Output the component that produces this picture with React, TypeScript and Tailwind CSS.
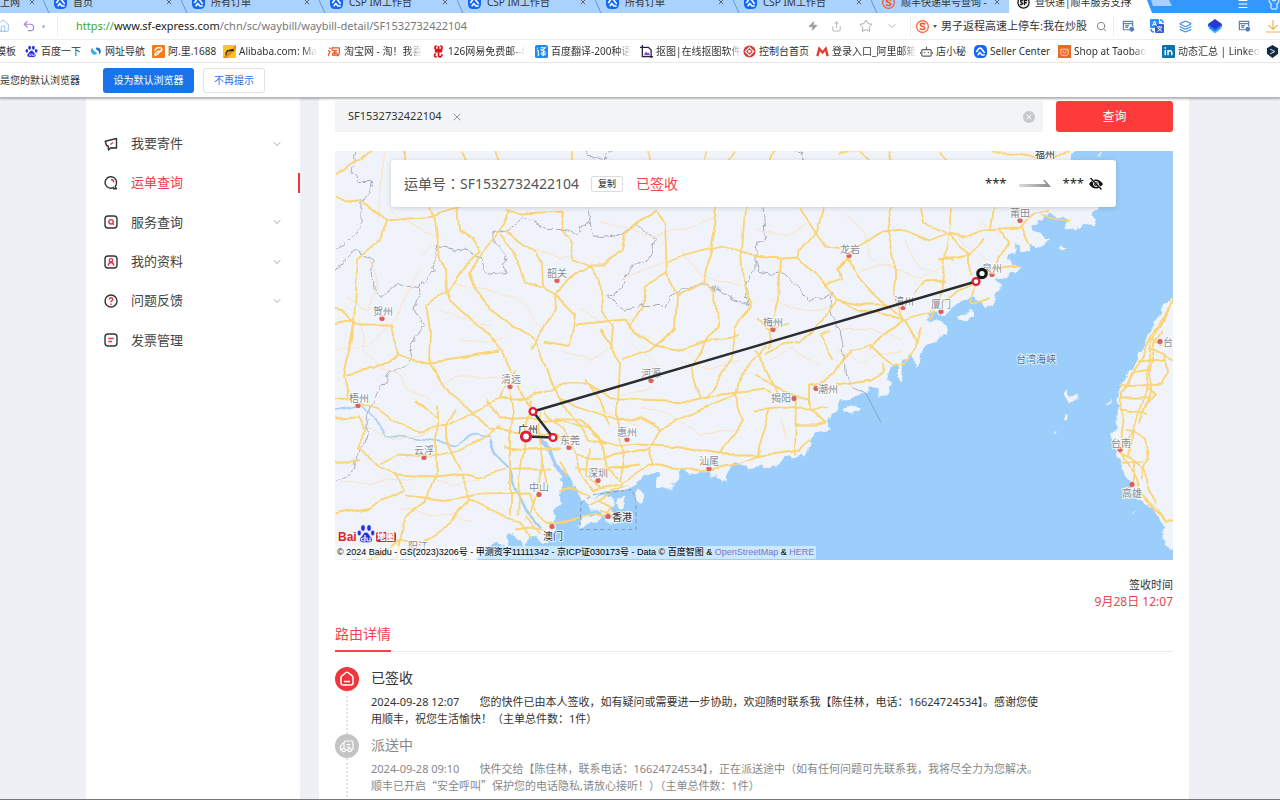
import React, { useState } from "react";
import { ChevronDown, Menu, Search, Share, Shirt, Star, Undo2, X, Zap, Layers, Home } from "lucide-react";
import { clsx } from "clsx";

type IconName =
    | "seller" | "sogou" | "sf" | "baidu" | "nav" | "ali" | "alibaba" | "taobao" | "netease"
    | "translate" | "crop" | "console" | "mail" | "robot" | "shop" | "linkedin" | "deepl";

function SiteIcon({ name }: { name: IconName }) {
    return (
        <svg viewBox="0 0 14 14" className="h-[13px] w-[13px] shrink-0" aria-hidden="true">
            {name === "seller" && (
                <>
                    <rect width="14" height="14" rx="5" fill="#1467f2" />
                    <path d="M2.500 7.500 5 4Q6.500 2.300 8 4l3.500 4.500M4 11l2.200-3 2.300 2.800h3" fill="none" stroke="#fff" strokeWidth="1.700" strokeLinejoin="round" />
                </>
            )}
            {name === "sogou" && (
                <>
                    <circle cx="7" cy="7" r="6.3" fill="none" stroke="#f4572a" strokeWidth="1.3" />
                    <path d="M10 4.600Q7 2.800 5 4.300 4 5.800 6.500 6.800 10 7.600 9.400 9.300 7.500 11 4 9.300" fill="none" stroke="#f4572a" strokeWidth="1.700" />
                </>
            )}
            {name === "sf" && (
                <>
                    <circle cx="7" cy="7" r="6" fill="#fff" stroke="#161616" strokeWidth="1.400" />
                    <path d="M6.500 5Q3.500 4 4 6.300L6 7.800Q6 9.500 3 9M8 10V5h3M8 7.300h2.500" fill="none" stroke="#161616" strokeWidth="1.500" />
                </>
            )}
            {name === "baidu" && (
                <g fill="#2932e1">
                    <ellipse cx="5" cy="3" rx="1.500" ry="2.200" />
                    <ellipse cx="9" cy="3" rx="1.500" ry="2.200" />
                    <ellipse cx="2" cy="6.300" rx="1.400" ry="2" />
                    <ellipse cx="12" cy="6.300" rx="1.400" ry="2" />
                    <path d="M7 6C5 6.500 4.500 8.500 3 9.800 1.500 12 3.500 13.800 7 12.900c3.500.9 5.500-.9 4-3.100C9.500 8.500 9 6.500 7 6z" />
                    <path d="M5 9.500v2h1.500V9M8 9.500v2h2v-2" fill="none" stroke="#fff" strokeWidth=".7" />
                </g>
            )}
            {name === "nav" && (
                <>
                    <path d="M3.500 3q-3 3.500 0 6.500 3 2 5 0Q9 8 7 7.500 4.500 6.500 3.500 3z" fill="#37b0e4" />
                    <path d="M7 3q1 3 3 3.500 1.500 1 .5 4 3-2 2-5.500Q11 2 7 3z" fill="#2b78c9" />
                </>
            )}
            {name === "ali" && (
                <>
                    <rect width="14" height="14" rx="1" fill="#ee7d21" />
                    <path d="M3 6q2-4 5-3 4 0 2 3L6 10q-3 2-3 0 0-1 3-3l5-1" fill="none" stroke="#fff" strokeWidth="1.500" />
                </>
            )}
            {name === "alibaba" && (
                <>
                    <rect width="14" height="14" fill="#fbc71f" />
                    <path d="M0 14 14 0v4L4 14z" fill="#f0821d" />
                    <path d="M3 11q0-6 8-6M4 6h8" fill="none" stroke="#2a2413" strokeWidth="1.400" />
                </>
            )}
            {name === "taobao" && (
                <path d="m1 3 2 1M0 6l2 1-2 5M5 2 4 6m1-3h7q1 8-2 9M5 6h5M5 8.500h5M7.500 6v5M5 9v2h5V9" fill="none" stroke="#f0541e" strokeWidth="1.400" />
            )}
            {name === "netease" && (
                <path d="M5 1Q2 2 4 5h6q2-3-1-4M7 1v7M3 7h8M4 9q-3 3 1 4M7 8v4q3 2 4-2" fill="none" stroke="#e0141e" strokeWidth="1.900" />
            )}
            {name === "translate" && (
                <>
                    <rect width="14" height="14" rx="2" fill="#2388ee" />
                    <path d="m2 3 1 1M2 6h1.500v5l1-1M6 3h5L7 6.500M6 4.500 11 7M6 8.500h6M9 6.500V12M6.500 10.500h5" fill="none" stroke="#fff" strokeWidth="1.100" />
                </>
            )}
            {name === "crop" && (
                <>
                    <path d="M2.500 0v12.500H14M0 2.500h9l3 3V14" fill="none" stroke="#242536" strokeWidth="1.400" />
                    <path d="m4 11 2.500-4 1.500 2 1-1 2 3z" fill="#7547e3" />
                </>
            )}
            {name === "console" && (
                <>
                    <circle cx="7" cy="7" r="6.500" fill="#d83a34" />
                    <path d="m7 2.500 4.500 4.500L7 11.500 2.500 7z" fill="none" stroke="#fff" strokeWidth="1.200" />
                    <circle cx="7" cy="7" r="1.500" fill="#fff" />
                </>
            )}
            {name === "mail" && <path d="M1.500 12 3.500 4 7 8l3.500-4 2 8" fill="none" stroke="#df3e38" strokeWidth="2.600" />}
            {name === "robot" && (
                <path d="M3 5h8q1 0 1 1v5q0 1-1 1H3q-1 0-1-1V6q0-1 1-1zM7 5V1.500M5 7.500v1.500M9 7.500V9M.5 7.500v2M13.500 7.500v2" fill="none" stroke="#5c6064" strokeWidth="1.200" />
            )}
            {name === "shop" && (
                <>
                    <rect width="14" height="14" fill="#ee6724" />
                    <path d="M3 4.500h8V9q0 2.500-4 2.500T3 9zM5.500 6v2q1.500 2 3 0V6" fill="none" stroke="#fdd5b5" />
                </>
            )}
            {name === "linkedin" && (
                <>
                    <rect width="14" height="14" rx="1" fill="#0a72b1" />
                    <path d="M3.500 5.500V11M3.500 2.500V4M6.500 11V5.500M6.500 7.500q3.500-3 4 .5v3" fill="none" stroke="#fff" strokeWidth="1.600" />
                </>
            )}
            {name === "deepl" && (
                <>
                    <path d="m7 0 6 3.500v6L7 14 1 9.500v-6z" fill="#0f2b46" />
                    <path d="m4.500 4.500 5 2.500-5 2.500" fill="none" stroke="#fff" />
                </>
            )}
        </svg>
    );
}

const tabs: { icon: IconName; title: string }[] = [
    { icon: "seller", title: "首页" },
    { icon: "seller", title: "所有订单" },
    { icon: "seller", title: "CSP IM工作台" },
    { icon: "seller", title: "CSP IM工作台" },
    { icon: "seller", title: "所有订单" },
    { icon: "seller", title: "CSP IM工作台" },
    { icon: "sogou", title: "顺丰快递单号查询 -" },
];

function TabEdge() {
    return (
        <svg viewBox="0 0 8 13" className="h-[13px] w-2 shrink-0" aria-hidden="true">
            <path d="M0 0 6 13" stroke="#5c97d6" fill="none" />
        </svg>
    );
}

function TabStrip() {
    return (
        <div className="flex h-[13px] shrink-0 items-end overflow-hidden bg-[#3596fc] text-[10px] text-[#333]">
            <div className="flex h-[22px] w-[43px] shrink-0 items-center gap-2 bg-[#aad2ff] whitespace-nowrap">
                <span className="w-5">上网</span>
                <X className="h-2 w-2" />
            </div>
            {tabs.map((tab, i) => (
                <div key={i} className="flex h-[22px] w-[138px] shrink-0 items-end bg-[#aad2ff]">
                    <TabEdge />
                    <button className="flex h-full min-w-0 flex-1 items-center gap-[6px] pr-2 pl-[3px]">
                        <SiteIcon name={tab.icon} />
                        <span className="min-w-0 flex-1 text-left whitespace-nowrap">{tab.title}</span>
                        <X className="h-2 w-2 shrink-0" />
                    </button>
                </div>
            ))}
            <div className="flex h-[22px] w-[136px] shrink-0 items-center gap-[5px] bg-white pr-3 pl-2">
                <SiteIcon name="sf" />
                <span className="min-w-0 flex-1 whitespace-nowrap">查快递|顺丰服务支持</span>
                <X className="h-2 w-2 shrink-0" />
            </div>
            <svg viewBox="0 0 32 13" className="h-[13px] w-8 shrink-0" aria-hidden="true">
                <path d="M0 0h2l5 13H0z" fill="#fff" />
                <path d="M6 0h18l3 6H8z" fill="#a5d0ff" />
            </svg>
            <div className="flex h-[18px] flex-1 items-center justify-end gap-[19px] text-white">
                <Menu className="h-3 w-3" />
                <Shirt className="h-3 w-3" />
            </div>
        </div>
    );
}

function WindowGear() {
    return (
        <svg viewBox="0 0 14 14" className="h-[13px] w-[13px] shrink-0" aria-hidden="true">
            <path d="M8 10.500H1.500v-9h10V7M1.500 4h10M3.500 6h4M3.500 8h3" fill="none" stroke="#6381ad" strokeWidth="1.300" />
            <circle cx="10.500" cy="10" r="2.600" fill="#527ebd" />
        </svg>
    );
}

function AddressBar() {
    return (
        <div className="flex h-[27px] shrink-0 items-center border-b border-[#ececec] bg-white text-[11px]">
            <Home className="-ml-1 h-[14px] w-[14px] shrink-0 text-[#84b9ec]" strokeWidth={1.5} />
            <Undo2 className="ml-3 h-[14px] w-[14px] shrink-0 text-[#ae80d9]" strokeWidth={2} />
            <span className="ml-1.5 h-[3px] w-[3px] shrink-0 rounded-full bg-[#9bbde3]" />
            <span className="ml-3 h-5 w-px shrink-0 bg-[#eee]" />
            <div className="flex min-w-0 flex-1 items-center pl-[18px] whitespace-nowrap">
                <span className="text-[#43a52e]">https://</span>
                <span className="text-[#222]">www.sf-express.com</span>
                <input
                    aria-label="地址栏"
                    defaultValue="/chn/sc/waybill/waybill-detail/SF1532732422104"
                    className="min-w-0 flex-1 bg-transparent text-[#777] focus:outline-none"
                />
            </div>
            <div className="flex shrink-0 items-center gap-[13px] pr-3 text-[#9b9b9b]">
                <Zap className="h-[10px] w-[10px] fill-[#9b9b9b]" />
                <Share className="h-[11px] w-[11px]" strokeWidth={1.5} />
                <Star className="ml-1 h-[14px] w-[14px]" strokeWidth={1.5} />
                <ChevronDown className="h-3 w-3" strokeWidth={1.5} />
            </div>
            <label className="flex h-5 w-[204px] shrink-0 items-center border-x border-[#eee] pl-[5px] text-[11px] text-[#333]">
                <SiteIcon name="sogou" />
                <span className="mx-[4px] border-x-2 border-t-[3px] border-x-transparent border-t-[#555]" />
                <input
                    aria-label="搜索"
                    defaultValue="男子返程高速上停车:我在炒股"
                    className="min-w-0 flex-1 bg-transparent focus:outline-none"
                />
                <Search className="mr-[6px] h-[11px] w-[11px] shrink-0 text-[#777]" />
            </label>
            <div className="flex w-[166px] shrink-0 items-center justify-between pl-2">
                <WindowGear />
                <svg viewBox="0 0 14 14" className="h-[14px] w-[14px]" aria-hidden="true">
                    <rect width="9" height="9" rx="1" fill="#2892ff" />
                    <rect x="5" y="5" width="9" height="9" rx="1" fill="#3a5bd8" />
                    <path d="M2.500 7 4.500 2l2 5M3 5.300h3" stroke="#fff" fill="none" />
                    <path d="M7 8h5M9.500 7v1M8 9l4 3.500M11.500 9 7.500 12.500" stroke="#fff" fill="none" />
                    <path d="M10 1q3 0 3 3M1 10q0 3 3 3" stroke="#2892ff" fill="none" strokeWidth="1.500" />
                </svg>
                <Layers className="h-[13px] w-[13px] text-[#3c87e0]" />
                <svg viewBox="0 0 16 16" className="h-4 w-4" aria-hidden="true">
                    <path d="m1 10 7 5.500L15 10z" fill="#35c8f5" />
                    <path d="m1 8.500 7 5 7-5V6H1z" fill="#2b6df0" />
                    <path d="m8 1 7 5-7 5-7-5z" fill="#2339d2" />
                </svg>
                <WindowGear />
                <svg viewBox="0 0 14 14" className="h-[14px] w-[14px]" aria-hidden="true">
                    <path d="M7 1v9M2.500 6 7 10.500 11.500 6M0 13h14" stroke="#eeb653" fill="none" strokeWidth="1.200" />
                </svg>
            </div>
        </div>
    );
}

// long: the label runs to the end of its slot and fades out there
const bookmarks: { icon: IconName; label: string; width: string; long?: boolean }[] = [
    { icon: "baidu", label: "百度一下", width: "w-[64px]" },
    { icon: "nav", label: "网址导航", width: "w-[63px]" },
    { icon: "ali", label: "阿.里.1688", width: "w-[71px]" },
    { icon: "alibaba", label: "Alibaba.com: Ma", width: "w-[105px]", long: true },
    { icon: "taobao", label: "淘宝网 - 淘！我喜", width: "w-[104px]", long: true },
    { icon: "netease", label: "126网易免费邮--f", width: "w-[103px]", long: true },
    { icon: "translate", label: "百度翻译-200种语", width: "w-[105px]", long: true },
    { icon: "crop", label: "抠图|在线抠图软件", width: "w-[103px]", long: true },
    { icon: "console", label: "控制台首页", width: "w-[73px]" },
    { icon: "mail", label: "登录入口_阿里邮箱", width: "w-[104px]", long: true },
    { icon: "robot", label: "店小秘", width: "w-[54px]" },
    { icon: "seller", label: "Seller Center", width: "w-[84px]" },
    { icon: "shop", label: "Shop at Taobao", width: "w-[104px]", long: true },
    { icon: "linkedin", label: "动态汇总 | Linked", width: "w-[104px]", long: true },
    { icon: "deepl", label: "", width: "w-[20px]" },
];

function BookmarkBar() {
    return (
        <nav className="flex h-[23px] shrink-0 items-center overflow-hidden border-b border-[#ececec] bg-white text-[10px] text-[#333]">
            <a href="#" className="flex w-[25px] shrink-0 whitespace-nowrap">
                <span className="-ml-1">模板</span>
            </a>
            {bookmarks.map((b) => (
                <a key={b.icon} href="#" aria-label={b.label || "DeepL"} className={clsx("flex shrink-0 items-center gap-[3px]", b.width)}>
                    <SiteIcon name={b.icon} />
                    <span className={clsx("whitespace-nowrap", b.long && "[mask-image:linear-gradient(to_right,black_calc(100%-14px),transparent)]")}>
                        {b.label}
                    </span>
                </a>
            ))}
        </nav>
    );
}

function DefaultBrowserBar() {
    return (
        <div className="relative z-10 flex h-[35px] shrink-0 items-center border-b border-[#b4b5b8] bg-white text-[10px] text-[#333] shadow-[0_1px_2px_rgba(0,0,0,0.3)]">
            <span>是您的默认浏览器</span>
            <button className="ml-[23px] h-[25px] w-[91px] rounded-[3px] bg-[#1a73e8] text-white">设为默认浏览器</button>
            <button className="ml-[9px] h-[25px] w-[62px] rounded-[3px] border border-[#dfe1e5] text-[#1a73e8]">不再提示</button>
        </div>
    );
}

type MenuIcon = "send" | "track" | "service" | "profile" | "help" | "invoice";

const menu: { icon: MenuIcon; label: string; open?: boolean }[] = [
    { icon: "send", label: "我要寄件", open: true },
    { icon: "track", label: "运单查询" },
    { icon: "service", label: "服务查询", open: true },
    { icon: "profile", label: "我的资料", open: true },
    { icon: "help", label: "问题反馈", open: true },
    { icon: "invoice", label: "发票管理" },
];

function MenuGlyph({ name }: { name: MenuIcon }) {
    const boxed = name === "service" || name === "profile" || name === "invoice";
    return (
        <svg viewBox="0 0 14 14" className="h-[14px] w-[14px] shrink-0" fill="none" stroke="#333" strokeWidth="1.400" strokeLinejoin="round" aria-hidden="true">
            {boxed && <rect x="1" y="1" width="12" height="12" rx="3" />}
            {name === "send" && (
                <>
                    <path d="M12.500 1.500 1.200 4.200l1.300 4.300L4.200 9l.3 4 2.300-2.200 5.700.2z" />
                    <path d="m6.500 7.500 2.500-2" stroke="#e0364a" />
                </>
            )}
            {name === "track" && (
                <>
                    <path d="M10 11.200A5.700 5.700 0 1 1 12.500 7q0 2-1.300 3.500l1.300 2.300H9" />
                    <path d="M7 3.500Q9.500 3.800 9.700 6.300" stroke="#e0364a" />
                </>
            )}
            {name === "service" && (
                <g stroke="#e0364a">
                    <circle cx="7" cy="6.800" r="2.200" />
                    <path d="m8.300 8.300 1.500 1.500" />
                </g>
            )}
            {name === "profile" && (
                <g stroke="#e0364a">
                    <circle cx="7" cy="5.300" r="1.700" />
                    <path d="M4.300 10.800q0-3.300 2.700-3.300t2.700 3.300" />
                </g>
            )}
            {name === "help" && (
                <>
                    <circle cx="7" cy="7" r="6" />
                    <path d="M5.200 5.500Q5.400 3.800 7 3.800T8.800 5.500Q8.800 6.500 7 7.300v1M7 9.500V11" stroke="#e0364a" />
                </>
            )}
            {name === "invoice" && <path d="M4.300 5.500h5.400M4.300 8.500h3.700" stroke="#e0364a" />}
        </svg>
    );
}

function Sidebar() {
    const [active, setActive] = useState("运单查询");

    return (
        <aside className="w-[214px] shrink-0 bg-white pt-[26px]">
            <ul className="grid h-[236px] grid-rows-6 text-[13px]">
                {menu.map((item) => (
                    <li key={item.label} className="flex items-center">
                        <button
                            onClick={() => setActive(item.label)}
                            className={clsx(
                                "flex h-5 w-full items-center gap-[13px] border-r-2 pl-[18px]",
                                active === item.label ? "border-[#e8353c] text-[#f03c44]" : "border-transparent text-[#444]"
                            )}
                        >
                            <MenuGlyph name={item.icon} />
                            <span className="flex-1 text-left">{item.label}</span>
                            {item.open && <ChevronDown className="mr-[15px] h-3 w-3 text-[#888]" strokeWidth={1.5} />}
                        </button>
                    </li>
                ))}
            </ul>
        </aside>
    );
}

const coast =
    "M335 151H1072L1070 165 1085 180 1098 200 1095 210 1090 216 1082 219 1075 232 1065 228 1067 221 1055 216 1048 213 1042 218 1032 228 1038 233 1050 240 1038 247 1029 244 1032 253 1022 252 1015 243 1017 252 1008 255 1010 262 1022 268 1008 277 995 281 1002 287 995 295 992 308 982 303 972 298 955 305 945 315 935 312 927 315 928 321 940 322 945 328 946 333 937 340 925 343 922 357 915 367 911 357 903 362 902 382 898 379 898 368 890 369 888 381 892 385 885 397 877 398 879 388 870 386 868 393 855 398 845 403 840 399 837 410 827 422 830 430 817 433 810 445 807 455 788 457 775 467 755 468 748 470 735 463 727 473 727 482 713 477 709 472 690 473 680 470 678 480 670 490 655 487 658 473 643 477 637 485 623 490 607 493 593 497 582 503 579 493 572 480 565 473 560 480 563 493 560 503 552 512 555 527 548 543 530 538 523 547 510 533 507 537 510 548 493 543 483 553 477 561H335z";

const taiwan =
    "M1175 295 1163 308 1156 320 1150 332 1146 341 1139 355 1132 370 1120 385 1118 405 1117 430 1111 437 1117 447 1122 467 1132 490 1138 500 1155 510 1163 527 1165 542 1170 550 1175 548z";

const islands = [
    "M587 499 600 496 612 496 615 503 611 509 615 514 606 517 600 511 590 511z",
    "M578 526 585 517 596 515 604 517 598 522 586 527 580 530z",
    "M605 519 617 519 619 524 607 524z",
    "M632 495 637 490 646 495 643 502 636 502z",
    "M617 499 624 498 626 505 620 510 616 505z",
    "M843 410 852 407 861 408 859 413 850 414z",
    "M1062 395 1067 391 1071 398 1078 397 1077 402 1068 403z",
    "M1062 414 1067 417 1062 418z",
    "M1055 431 1058 431 1056 434z",
    "M957 316 966 313 972 309 974 317 964 321 958 320z",
    "M1106 405 1111 400 1113 401 1107 407z",
    "M1060 245 1067 248 1062 251 1058 248z",
    "M1077 217 1087 213 1095 219 1092 226 1084 223 1078 231z",
    "M1086 203 1099 207 1096 212 1087 211z",
    "M1098 154 1103 153 1100 158z",
    "M1134 512 1138 511 1135 514z",
];

const highways = [
    "M335 175 350 163 362 160 372 151M335 197 345 202 360 201 385 221 435 217 465 208",
    "M385 221 380 240 358 258 356 290 354 323M430 208 434 220 437 245 445 270 446 293 427 305 431 330 430 362",
    "M404 151V165M462 151 467 165M495 151 500 165M571 151V165M649 151 650 165M706 151 700 165M735 151 728 165M774 151 770 165M838 153 860 153 873 165M890 151 888 165M940 151 948 162M990 153 1010 153 1030 156 1050 165 1068 151",
    "M458 208 460 228 472 238 481 253 460 272 447 293 450 302 475 325 490 335 503 352 512 372 530 410",
    "M511 208 505 225 490 243 482 257 469 272 475 290 490 310 515 328 535 340 545 365 550 380",
    "M508 208 520 214 565 212 562 230 570 240 575 260 590 268 600 280 602 310 612 328 610 350 620 365 618 400 618 440",
    "M505 232 520 243 535 252 542 265 543 287 555 295 575 275 590 266 605 266 622 250 625 235 640 222 655 208",
    "M500 236 512 252 520 270 525 283 542 288M555 295 556 310 540 335 530 350M555 295 575 315 570 345 545 340",
    "M655 208 665 225 667 275 675 295 673 330 650 350 622 360M668 262 685 255 720 246 745 255 765 257",
    "M717 208 715 225 710 250 705 275 703 282 715 293 717 325 705 345 690 365 700 400M703 282 690 290 675 296",
    "M745 208 742 255 745 290 752 305 735 330 733 355 705 400M667 275 645 287 642 310 630 328M575 325 605 322 625 320 640 335 655 345 685 350 715 340 740 337",
    "M335 308 355 324 390 324 392 335 398 355 415 361 430 362M354 324 352 340 343 375 348 400",
    "M335 326 355 322 350 345M430 362 480 355 500 352M430 362 450 395 475 415 490 430 512 432",
    "M345 375 375 370 398 355M335 399 362 403 380 408 390 420 420 432 450 425 475 410 500 400 512 372",
    "M335 418 360 417 368 435 358 450 380 468 395 475 435 477 460 474 480 478 505 470M335 462 360 462",
    "M380 465 400 456 430 458 460 450 480 440 500 428M437 405V470L425 500 405 520 395 561",
    "M335 515 370 508 405 490 395 475M405 495 450 500 480 495 530 494M400 540 420 545 450 525 470 500 460 474",
    "M400 540 380 555 365 561M470 500 500 515 520 522 530 538M455 410 447 425 447 445 460 470M415 400 437 420",
    "M516 370 510 390 513 415 510 440 510 515M530 400 526 425 525 450 520 480 518 515M541 410 540 460 545 485",
    "M500 400 530 398 560 385 590 385 610 400 640 400 690 402 720 395 765 390 780 397",
    "M487 400 500 420 530 418 560 422 590 430 605 445M505 448 530 450 560 448M510 470 550 470M507 432 530 433 555 437 570 447",
    "M545 410 560 430 570 445 580 470 593 490 620 485 640 472 650 465 680 468 700 472 735 465 760 455",
    "M550 380 560 400 575 420 590 440 615 447 640 445 680 448 720 455 760 455 800 450 810 440",
    "M560 400 590 410 618 420 640 418 660 430 650 450 655 465M585 380 600 400 610 425",
    "M555 420 580 420 600 440 605 470 620 480M575 455 600 458 625 455 650 450M575 468 600 470 640 465M590 447 588 475 600 488M618 440 625 455 620 482",
    "M600 330 612 350M660 430 700 410 735 395 740 375 760 355 765 345M735 395 745 420 725 445 720 455",
    "M630 485 610 491 596 502M590 505 600 500 610 507 606 514M600 511 610 515M560 493 575 490 590 494M548 525 575 520 595 515 608 517",
    "M525 515 540 535M530 494 535 510 548 525M540 460 538 490 530 515M515 530 530 528 545 532M560 462 568 478",
    "M755 350 765 365 775 385 795 397 810 400 812 410 825 422M755 375 775 385M755 412 800 408 815 412 830 408M770 410 760 440 758 455M795 397 794 455",
    "M810 405 810 385 825 382 835 375 850 350 870 345 890 365 905 362 915 350 922 330M835 360 820 335 830 330",
    "M838 385 870 380 883 372 882 365M795 425 815 425 825 422M780 400 775 385",
    "M800 208 815 230 825 247 855 250 880 232 905 230 930 240 947 235 965 238 985 230 1020 228 1035 215 1050 210",
    "M824 208 817 230 800 250 797 258 780 259 755 257M797 258 825 285 838 300 865 305 885 305 903 318",
    "M847 258 855 275 880 300 895 312M893 208 887 230 895 260 895 290 903 320 890 330 870 350",
    "M922 208 925 225 947 236 945 260 940 300 930 320M950 208 948 236 968 252 968 275M993 208 990 228",
    "M1000 230 1008 242 995 265 975 283M940 260 970 255 985 240M975 285 970 302 990 300M975 272 1018 267",
    "M838 300 825 320 800 345 780 345 765 355M780 260 778 300 770 330 768 350M825 287 840 280 838 270 850 258",
    "M905 320 930 312 960 290 975 283M915 295 925 283 945 282M838 300 860 310 905 320 918 345",
    "M1022 228 1030 245M1042 215 1070 222M755 320 770 330 790 325M940 260 955 260",
    "M1173 300 1160 320 1148 345 1135 370 1122 395 1121 430 1125 455 1135 480 1140 495 1160 515 1165 523H1175",
    "M1167 310 1157 330 1150 350 1147 380 1145 400 1133 430 1123 450 1135 460 1130 490M1163 330 1155 345 1150 370 1150 400 1140 425",
    "M1173 360 1165 352 1150 350M1165 352 1167 375 1160 385 1120 387M1121 399H1150M1120 409 1145 412M1125 430 1145 440 1148 460 1140 480",
    "M1133 430 1130 455 1145 470 1147 490 1155 505M1123 462H1145M1133 373 1150 370M1137 362 1165 360M1150 340 1165 345M1147 388 1155 395 1145 412 1150 415",
];

const minorRoads = [
    "M390 208 395 215 440 240M385 151 383 165 378 220M335 350 370 345 400 310 420 270",
    "M435 245 420 255M455 285 490 290 520 300 545 330M535 252 560 258 570 255M580 310 600 322 640 320",
    "M600 222 650 235 690 230 720 215M620 280 645 270 665 262M680 250 700 275 740 285",
    "M345 300 370 310 378 290 372 260M360 320 365 350 380 370 400 375 410 390 430 400",
    "M440 310 460 320 490 325M460 340 490 345 510 335M440 385 470 375 500 380M370 430 400 440 440 430",
    "M340 480 370 485 420 478 450 485 480 480M400 510 440 515 470 520M630 340 660 370 650 390 620 395",
    "M680 360 710 370 740 360M640 410 670 415 700 435 740 430M770 360 790 350 820 365M780 420 785 440M770 300 800 310 830 310",
    "M755 230 790 235 810 220M845 215 865 235 870 260 900 270M905 240 920 270 940 275M860 270 890 265 920 280 940 270M960 240 985 260",
    "M840 330 870 330 900 340M840 350 860 365 900 350M980 220 1000 235M600 410 640 425M560 350 590 360 610 350",
];

const borders = [
    "M357 151 352 172 358 182 375 182 362 202 362 225 350 240 335 250",
    "M335 272 345 260 355 252 370 257 375 290 382 298 395 285 420 287 433 270 436 247 465 251 480 257 487 275 505 272 507 255 495 243 495 232 510 230 525 217 530 222 545 230 565 230 575 233 590 222 588 208",
    "M590 222 594 238 620 235 635 225 645 230 655 240 650 258 630 270 620 290 607 295 625 312 640 305 665 305 675 293 700 285 720 290 735 302 749 305 745 285 755 272 755 250 765 235 763 208",
    "M420 287 415 310 425 325 410 345 412 360 390 375 377 393 370 405 365 440 350 475 335 483",
    "M755 262 760 272 785 275 800 288 808 302 832 295 830 312 840 330 844 355 845 370 852 388 866 394M587 151 590 157 605 160 612 151M796 151 803 155 805 162",
];

const cities: { name: string; x: number; y: number; dx: number; dy: number; bold?: boolean; nodot?: boolean }[] = [
    { name: "福州", x: 1045, y: 158, dx: 0, dy: 0, bold: true, nodot: true },
    { name: "莆田", x: 1020, y: 221, dx: 0, dy: -4 },
    { name: "龙岩", x: 849, y: 256, dx: 1, dy: -3 },
    { name: "泉州", x: 992, y: 275, dx: 0, dy: -3 },
    { name: "漳州", x: 903, y: 308, dx: 1, dy: -3 },
    { name: "厦门", x: 941, y: 312, dx: 0, dy: -4 },
    { name: "韶关", x: 557, y: 281, dx: 0, dy: -4 },
    { name: "贺州", x: 382, y: 319, dx: 1, dy: -4 },
    { name: "梅州", x: 773, y: 330, dx: 0, dy: -4 },
    { name: "河源", x: 651, y: 381, dx: 0, dy: -4 },
    { name: "清远", x: 510, y: 387, dx: 1, dy: -4 },
    { name: "梧州", x: 358, y: 406, dx: 1, dy: -4 },
    { name: "广州", x: 528, y: 433, dx: 0, dy: 0, bold: true, nodot: true },
    { name: "东莞", x: 569, y: 448, dx: 1, dy: -4 },
    { name: "惠州", x: 627, y: 440, dx: 0, dy: -4 },
    { name: "云浮", x: 424, y: 458, dx: 0, dy: -4 },
    { name: "深圳", x: 598, y: 481, dx: 0, dy: -4 },
    { name: "中山", x: 539, y: 495, dx: 0, dy: -4 },
    { name: "汕尾", x: 709, y: 469, dx: 0, dy: -4 },
    { name: "揭阳", x: 794, y: 399, dx: -13, dy: 3 },
    { name: "潮州", x: 816, y: 389, dx: 12, dy: 4 },
    { name: "香港", x: 608, y: 517, dx: 14, dy: 4, bold: true },
    { name: "澳门", x: 552, y: 527, dx: 1, dy: 13, bold: true },
    { name: "台南", x: 1120, y: 450, dx: 1, dy: -3 },
    { name: "高雄", x: 1132, y: 485, dx: 0, dy: 12 },
    { name: "台", x: 1160, y: 342, dx: 8, dy: 4 },
    { name: "阳江", x: 418, y: 550, dx: 0, dy: 0, nodot: true },
];

function RouteMap() {
    return (
        <svg viewBox="335 151 838 410" preserveAspectRatio="xMidYMid slice" className="h-[409px] w-full" role="img" aria-label="运单路由地图">
            <defs>
                <filter id="rough" x="0" y="0" width="100%" height="100%">
                    <feTurbulence type="fractalNoise" baseFrequency="0.1" numOctaves="3" seed="4" />
                    <feDisplacementMap in="SourceGraphic" scale="9" xChannelSelector="R" yChannelSelector="G" />
                </filter>
                <filter id="bend" x="0" y="0" width="100%" height="100%">
                    <feTurbulence type="fractalNoise" baseFrequency="0.045" numOctaves="1" seed="9" />
                    <feDisplacementMap in="SourceGraphic" scale="10" xChannelSelector="R" yChannelSelector="G" />
                </filter>
            </defs>
            <rect x="335" y="151" width="838" height="410" fill="#9bcefa" />
            <path d="M335 151H350V561H335zM335 151H1060V160H335zM1165 312H1173V530H1165z" fill="#f0f3fa" />
            <g filter="url(#rough)">
                <path d={coast} fill="#f0f3fa" />
                <path d={taiwan} fill="#f0f3fa" />
                {islands.map((d) => (
                    <path key={d} d={d} fill="#f0f3fa" />
                ))}
                <g fill="none" stroke="#a8adbd" strokeWidth="1">
                    {borders.map((d) => (
                        <path key={d} d={d} />
                    ))}
                </g>
            </g>
            <g filter="url(#bend)" fill="none" strokeLinejoin="round">
                <g stroke="#a5cef5">
                    <path d="M335 411 350 408 362 405 375 418 385 435 420 440 455 445 475 435 490 438" strokeWidth="1.500" />
                    <path d="M490 440 495 455 510 470 515 490 525 510 542 530" strokeWidth="2.500" />
                    <path d="M540 440 550 450 555 465 565 478" strokeWidth="4" />
                </g>
                <g stroke="#fae3c6" strokeWidth="1">
                    {minorRoads.map((d) => (
                        <path key={d} d={d} />
                    ))}
                </g>
                <g stroke="#fad474" strokeWidth="1.800">
                    {highways.map((d) => (
                        <path key={d} d={d} />
                    ))}
                </g>
            </g>
            <path d="m866 394 15 29" stroke="#7d93ab" strokeWidth=".7" />
            <path d="m581 503 13-8 38-5 4 11v29h-56z" fill="none" stroke="#738ba8" strokeDasharray="4 3" strokeWidth=".8" />
            <g textAnchor="middle" fontSize="10" stroke="#fff" strokeWidth="2" strokeOpacity=".8" paintOrder="stroke">
                {cities.map((c) => (
                    <g key={c.name}>
                        {!c.nodot && <circle cx={c.x} cy={c.y} r="2.500" fill="#d9605c" stroke="#e9aaa8" strokeWidth=".8" />}
                        <text x={c.x + c.dx} y={c.y + c.dy} fill={c.bold ? "#333" : "#858b95"}>{c.name}</text>
                    </g>
                ))}
                <text x="1036" y="363" fill="#4671a6" strokeWidth="1.500">台湾海峡</text>
            </g>
            <path d="M982 274 976 282 533 412 553 438 526 437" fill="none" stroke="#2b2c30" strokeWidth="2.500" strokeLinejoin="round" />
            <g fill="#fff" stroke="#e01f35" strokeWidth="2.400">
                <circle cx="976" cy="282" r="3.400" />
                <circle cx="533" cy="412" r="3.400" />
                <circle cx="553" cy="438" r="3.400" />
                <circle cx="526" cy="437" r="4.500" strokeWidth="3.200" />
                <circle cx="982" cy="274" r="4.200" stroke="#161719" strokeWidth="3.200" />
            </g>
        </svg>
    );
}

function BaiduMark() {
    return (
        <div className="flex items-end font-['Liberation_Sans','Noto_Sans_CJK_SC',sans-serif] text-[12px] leading-[14px] font-black text-[#e1251b]">
            <span className="[text-shadow:0_0_2px_#fff]">Bai</span>
            <svg viewBox="0 0 18 20" className="h-5 w-[18px]" aria-hidden="true">
                <g fill="#2630d8" stroke="#fff" strokeWidth=".6">
                    <ellipse cx="6" cy="4" rx="2.200" ry="3.300" />
                    <ellipse cx="12" cy="4" rx="2.200" ry="3.300" />
                    <ellipse cx="2.300" cy="9" rx="2" ry="2.800" />
                    <ellipse cx="15.700" cy="9" rx="2" ry="2.800" />
                    <path d="M9 8c-3 .5-3 3.500-5.500 5.500C1.500 17 4 19.500 9 18.500c5 1 7.500-1.500 5.500-5C12 11.500 12 8.500 9 8z" />
                </g>
                <path d="M8 11v6H6q-1.500 0-1.500-1.500T6 14h2M10 13.500V16q0 1 1 1h2v-3.500" fill="none" stroke="#fff" strokeWidth="1.200" />
            </svg>
            <span className="mb-0.5 ml-px rounded-[2px] bg-[#e1251b] px-px text-[9px] leading-[10px] text-white">地图</span>
        </div>
    );
}

function MapPanel() {
    return (
        <section className="relative mt-[19px] overflow-hidden">
            <RouteMap />
            <div className="absolute top-[9px] right-[57px] left-[56px] flex h-[47px] items-center rounded-[3px] bg-white pr-[13px] pl-[13px] text-[#555] shadow-[0_1px_5px_rgba(60,70,90,0.2)]">
                <span lang="zh-TW" className="font-['Noto_Sans','Noto_Sans_CJK_TC',sans-serif] text-[14px]">运单号：SF1532732422104</span>
                <button className="ml-3 h-4 w-8 rounded-[2px] border border-[#ddd] text-[9px] leading-[13px] text-[#222]">复制</button>
                <span className="ml-[13px] text-[14px] text-[#f0474c]">已签收</span>
                <span className="ml-auto text-[13px] text-[#222]">***</span>
                <svg viewBox="0 0 32 8" className="mx-3 h-2 w-8" aria-hidden="true">
                    <defs>
                        <linearGradient id="arrow">
                            <stop offset="0" stopColor="#ddd" />
                            <stop offset="1" stopColor="#888" />
                        </linearGradient>
                    </defs>
                    <path d="M0 4h27l-3-4h2l6 7H0z" fill="url(#arrow)" />
                </svg>
                <span className="text-[13px] text-[#222]">***</span>
                <button aria-label="显示" className="ml-[5px]">
                    <svg viewBox="0 0 14 12" className="h-3 w-[14px]">
                        <path d="M0 6q3-4.500 7-4.500T14 6q-3 4.500-7 4.500T0 6z" fill="#111" />
                        <circle cx="7" cy="6" r="2.500" fill="none" stroke="#fff" />
                        <path d="m2 1 11 10" stroke="#fff" strokeWidth="2" />
                        <path d="M1.500 0 12.500 11.500" stroke="#111" strokeWidth="1.300" />
                    </svg>
                </button>
            </div>
            <div className="absolute bottom-4 left-[3px]">
                <BaiduMark />
            </div>
            <p className="absolute bottom-[1px] left-0 bg-white/50 px-0.5 font-['Liberation_Sans','Noto_Sans_CJK_SC',sans-serif] text-[9px] leading-[13px] whitespace-nowrap text-black">
                © 2024 Baidu - GS(2023)3206号 - 甲测资字11111342 - 京ICP证030173号 - Data © 百度智图 &{" "}
                <a href="#" className="text-[#7777cc]">OpenStreetMap</a> &{" "}
                <a href="#" className="text-[#7777cc]">HERE</a>
            </p>
        </section>
    );
}

const events = [
    {
        title: "已签收",
        time: "2024-09-28 12:07",
        lines: [
            "您的快件已由本人签收，如有疑问或需要进一步协助，欢迎随时联系我【陈佳林，电话：16624724534】。感谢您使",
            "用顺丰，祝您生活愉快！（主单总件数：1件）",
        ],
        done: true,
    },
    {
        title: "派送中",
        time: "2024-09-28 09:10",
        lines: [
            "快件交给【陈佳林，联系电话：16624724534】，正在派送途中（如有任何问题可先联系我，我将尽全力为您解决。",
            "顺丰已开启“安全呼叫”保护您的电话隐私,请放心接听！）（主单总件数：1件）",
        ],
        done: false,
    },
];

// curly quotes take the full-width form of the Chinese face
function Line({ text }: { text: string }) {
    return (
        <>
            {text.split(/([“”])/).map((part, i) =>
                part === "“" || part === "”" ? (
                    <span key={i} className="font-['Noto_Sans_CJK_SC',sans-serif]">{part}</span>
                ) : (
                    part
                )
            )}
        </>
    );
}

function Timeline() {
    return (
        <ol className="pt-[15px]">
            {events.map((e) => (
                <li key={e.title} className="flex gap-3">
                    <div className="flex w-6 shrink-0 flex-col items-center">
                        <svg viewBox="0 0 24 24" className="h-6 w-6 shrink-0" fill="none" stroke="#fff" strokeWidth="1.500" strokeLinejoin="round" aria-hidden="true">
                            <circle cx="12" cy="12" r="12" fill={e.done ? "#f2353a" : "#c4c4c4"} stroke="none" />
                            {e.done ? (
                                <path d="M6 10.500q0-1 .8-1.700L11 5.500q1-.7 2 0l4.200 3.300q.8.7.8 1.700V16q0 2-2 2H8q-2 0-2-2zM9 14.500h6" />
                            ) : (
                                <path d="M9 15V8.500Q9 7 10.500 7h6Q18 7 18 8.500v6Q18 16 16.500 16H16M9 9.500H7.500L5.500 12v4H7M10.500 16h2.500M11.500 10.500h4M11.500 13h4M7 16a1.700 1.700 0 1 0 3.400 0 1.700 1.700 0 1 0-3.400 0M13 16a1.700 1.700 0 1 0 3.400 0 1.700 1.700 0 1 0-3.400 0" strokeWidth="1.200" />
                            )}
                        </svg>
                        <span className="flex-1 border-l-2 border-dotted border-[#e2e2e2]" />
                    </div>
                    <div className={clsx("min-w-0 flex-1 pb-[7px]", e.done ? "text-[#333]" : "text-[#888]")}>
                        <h3 className="text-[14px] leading-[22px]">{e.title}</h3>
                        <p className="mt-1 text-[11px] leading-[17px]">
                            <time className="mr-5">{e.time}</time>
                            <Line text={e.lines[0]} />
                            <br />
                            <Line text={e.lines[1]} />
                        </p>
                    </div>
                </li>
            ))}
        </ol>
    );
}

function WaybillDetail() {
    return (
        <main className="min-w-0 flex-1 bg-white px-4 pt-[3px]">
            <form className="flex h-[31px] gap-[13px]" onSubmit={(e) => e.preventDefault()}>
                <div className="flex min-w-0 flex-1 items-center bg-[#f3f4f6] pr-2 pl-[13px] text-[11px] text-[#333]">
                    <span>SF1532732422104</span>
                    <button type="button" aria-label="移除" className="ml-[9px]">
                        <X className="h-3 w-3 text-[#999]" />
                    </button>
                    <input aria-label="运单号" className="min-w-0 flex-1 bg-transparent focus:outline-none" />
                    <button type="button" aria-label="清空" className="flex h-3 w-3 items-center justify-center rounded-full bg-[#c6c8cc]">
                        <X className="h-2 w-2 text-white" strokeWidth={3} />
                    </button>
                </div>
                <button className="w-[117px] shrink-0 rounded-[3px] bg-[#ff3a3b] text-[12px] text-white">查询</button>
            </form>
            <MapPanel />
            <div className="mt-4 text-right">
                <p className="text-[11px] leading-[17px] text-[#333]">签收时间</p>
                <p className="text-[12px] leading-[18px] text-[#e6484e]">9月28日 12:07</p>
            </div>
            <div className="mt-3 flex border-b border-[#ececec]">
                <h2 className="-mb-px border-b-2 border-[#f0474c] pb-[5px] text-[14px] leading-[22px] text-[#f0474c]">路由详情</h2>
            </div>
            <Timeline />
        </main>
    );
}

export default function App() {
    return (
        <div className="flex h-screen flex-col overflow-hidden border-b border-[#777] bg-[#eff0f5] font-['Noto_Sans','Noto_Sans_CJK_SC',sans-serif]">
            <TabStrip />
            <AddressBar />
            <BookmarkBar />
            <DefaultBrowserBar />
            <div className="flex min-h-0 flex-1 gap-[19px] overflow-hidden pr-[91px] pl-[86px]">
                <Sidebar />
                <WaybillDetail />
            </div>
        </div>
    );
}
